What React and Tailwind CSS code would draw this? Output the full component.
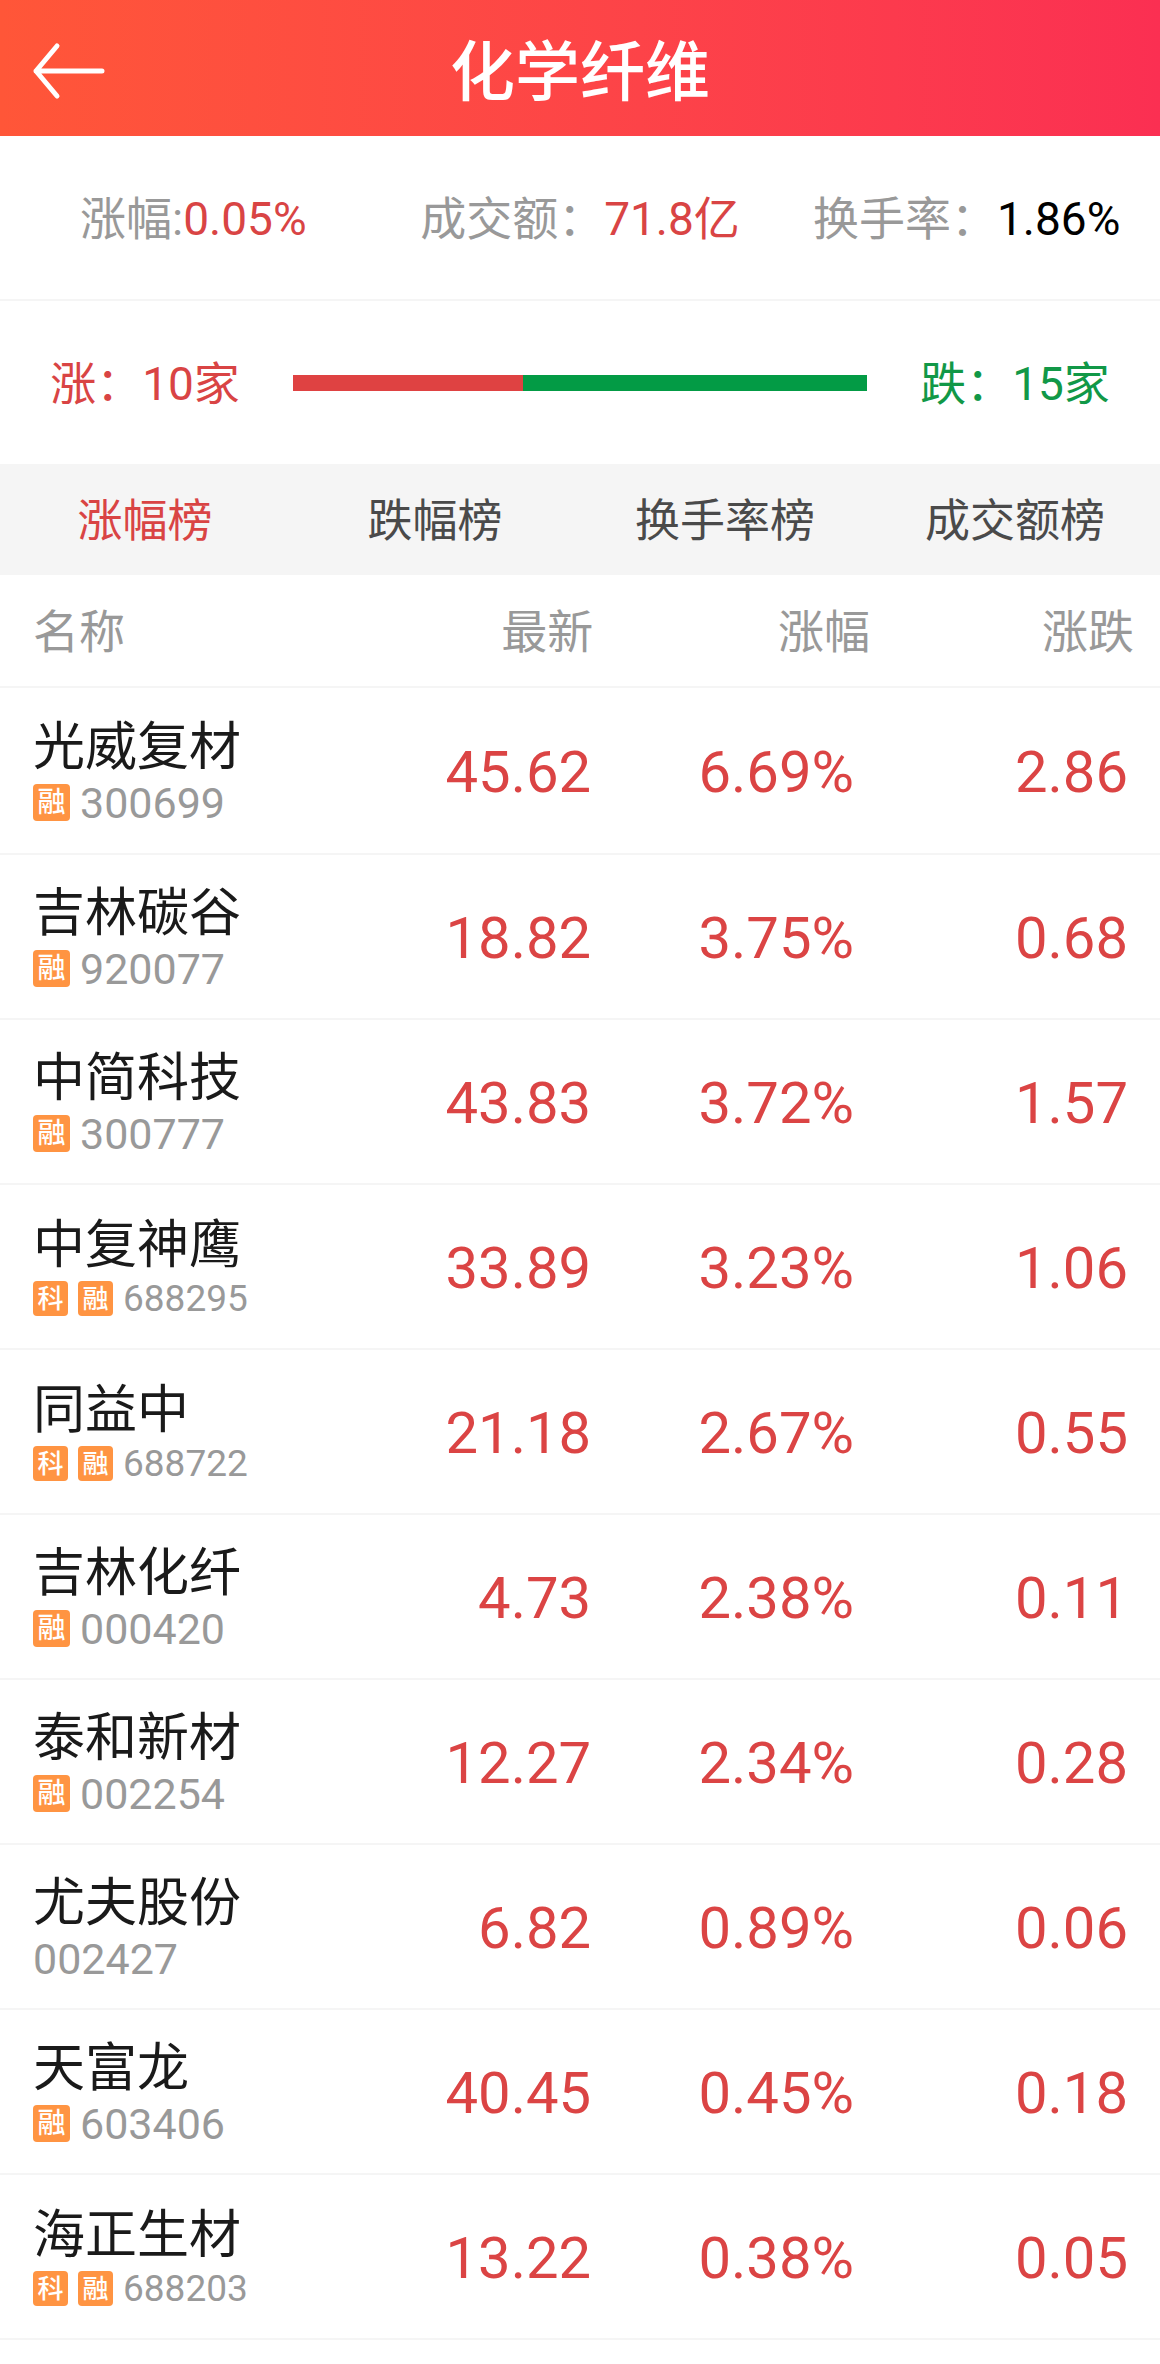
import { useState } from "react";

const tabs = ["涨幅榜", "跌幅榜", "换手率榜", "成交额榜"];

const stocks = [
  { name: "光威复材", code: "300699", tags: ["融"], price: "45.62", percent: "6.69%", change: "2.86" },
  { name: "吉林碳谷", code: "920077", tags: ["融"], price: "18.82", percent: "3.75%", change: "0.68" },
  { name: "中简科技", code: "300777", tags: ["融"], price: "43.83", percent: "3.72%", change: "1.57" },
  { name: "中复神鹰", code: "688295", tags: ["科", "融"], price: "33.89", percent: "3.23%", change: "1.06" },
  { name: "同益中", code: "688722", tags: ["科", "融"], price: "21.18", percent: "2.67%", change: "0.55" },
  { name: "吉林化纤", code: "000420", tags: ["融"], price: "4.73", percent: "2.38%", change: "0.11" },
  { name: "泰和新材", code: "002254", tags: ["融"], price: "12.27", percent: "2.34%", change: "0.28" },
  { name: "尤夫股份", code: "002427", tags: [], price: "6.82", percent: "0.89%", change: "0.06" },
  { name: "天富龙", code: "603406", tags: ["融"], price: "40.45", percent: "0.45%", change: "0.18" },
  { name: "海正生材", code: "688203", tags: ["科", "融"], price: "13.22", percent: "0.38%", change: "0.05" },
];

function Header() {
  return (
    <header className="grid grid-cols-[1fr_auto_1fr] items-center h-[136px] pt-1.5 bg-linear-to-r from-[#ff5638] to-[#fb2f52] text-white">
      <button aria-label="返回" className="pl-8 justify-self-start">
        <svg width="74" height="60" viewBox="0 0 74 60" fill="none" stroke="currentColor" strokeWidth="5" strokeLinecap="round" strokeLinejoin="round">
          <path d="M4 30H70M25 5L4 30L25 55" />
        </svg>
      </button>
      <h1 className="pt-1 text-[65px] leading-[80px] font-medium">化学纤维</h1>
    </header>
  );
}

function Summary() {
  return (
    <section className="grid grid-cols-3 items-center h-[165px] pt-1 border-b-2 border-[#f5f5f5] text-[46px] text-center text-[#999]">
      <p>
        涨幅:<span className="text-[#d94444]">0.05%</span>
      </p>
      <p>
        成交额：<span className="text-[#d94444]">71.8亿</span>
      </p>
      <p>
        换手率：<span className="text-black">1.86%</span>
      </p>
    </section>
  );
}

function UpDown({ up, down }) {
  return (
    <section className="flex items-center h-[163px] text-[46px] text-center">
      <p className="w-1/4 pt-1 text-[#d94444]">涨：{up}家</p>
      <div className="flex flex-1 h-4 mx-[3px]">
        <div className="bg-[#df4242]" style={{ width: `${(up / (up + down)) * 100}%` }} />
        <div className="flex-1 bg-[#039b45]" />
      </div>
      <p className="w-1/4 pt-1 text-[#119847]">跌：{down}家</p>
    </section>
  );
}

function StockRow({ stock }) {
  const small = stock.tags.length > 1;

  return (
    <tr className="h-[165px] first:h-[167px] border-b-2 border-[#f5f5f5] text-right text-[58px] text-[#db4444]">
      <td className="pt-2 pl-[33px] text-left">
        <div className="text-[52px] leading-[56px] text-[#1a1a1a]">{stock.name}</div>
        <div className={small ? "flex items-center gap-2.5 leading-[50px]" : "flex items-center gap-2.5 leading-[54px]"}>
          {stock.tags.map((tag) => (
            <span
              key={tag}
              className={
                small
                  ? "flex items-center justify-center size-[35px] rounded bg-[#ff9442] text-[26px] leading-none font-medium text-white"
                  : "flex items-center justify-center size-[37px] rounded bg-[#ff9442] text-[28px] leading-none font-medium text-white"
              }
            >
              {tag}
            </span>
          ))}
          <span className={small ? "text-[37px] text-[#999]" : "text-[43px] text-[#999]"}>{stock.code}</span>
        </div>
      </td>
      <td className="pt-1 pr-3">{stock.price}</td>
      <td className="pt-1 pr-4">{stock.percent}</td>
      <td className="pt-1 pr-8">{stock.change}</td>
    </tr>
  );
}

export default function App() {
  const [activeTab, setActiveTab] = useState("涨幅榜");

  return (
    <div className="min-h-screen bg-white font-[Roboto,'Noto_Sans_CJK_SC',sans-serif]">
      <Header />
      <Summary />
      <UpDown up={10} down={15} />

      {/* Ranking tabs */}
      <nav className="grid grid-cols-4 h-[111px] pt-1 bg-[#f5f5f5] text-[45px]">
        {tabs.map((tab) => (
          <button
            key={tab}
            className={tab === activeTab ? "text-[#d94444]" : "text-[#4a4a4a]"}
            onClick={() => setActiveTab(tab)}
          >
            {tab}
          </button>
        ))}
      </nav>

      {/* Stock list */}
      <table className="w-full table-fixed">
        <thead>
          <tr className="h-[112px] border-b-2 border-[#f5f5f5] text-[46px] text-right text-[#999]">
            <th className="w-[30%] pt-1 pl-[33px] text-left font-normal">名称</th>
            <th className="w-[22%] pt-1 pr-2.5 font-normal">最新</th>
            <th className="w-[23%] pt-1 font-normal">涨幅</th>
            <th className="w-[25%] pt-1 pr-[26px] font-normal">涨跌</th>
          </tr>
        </thead>
        <tbody>
          {stocks.map((stock) => (
            <StockRow key={stock.code} stock={stock} />
          ))}
        </tbody>
      </table>
    </div>
  );
}
